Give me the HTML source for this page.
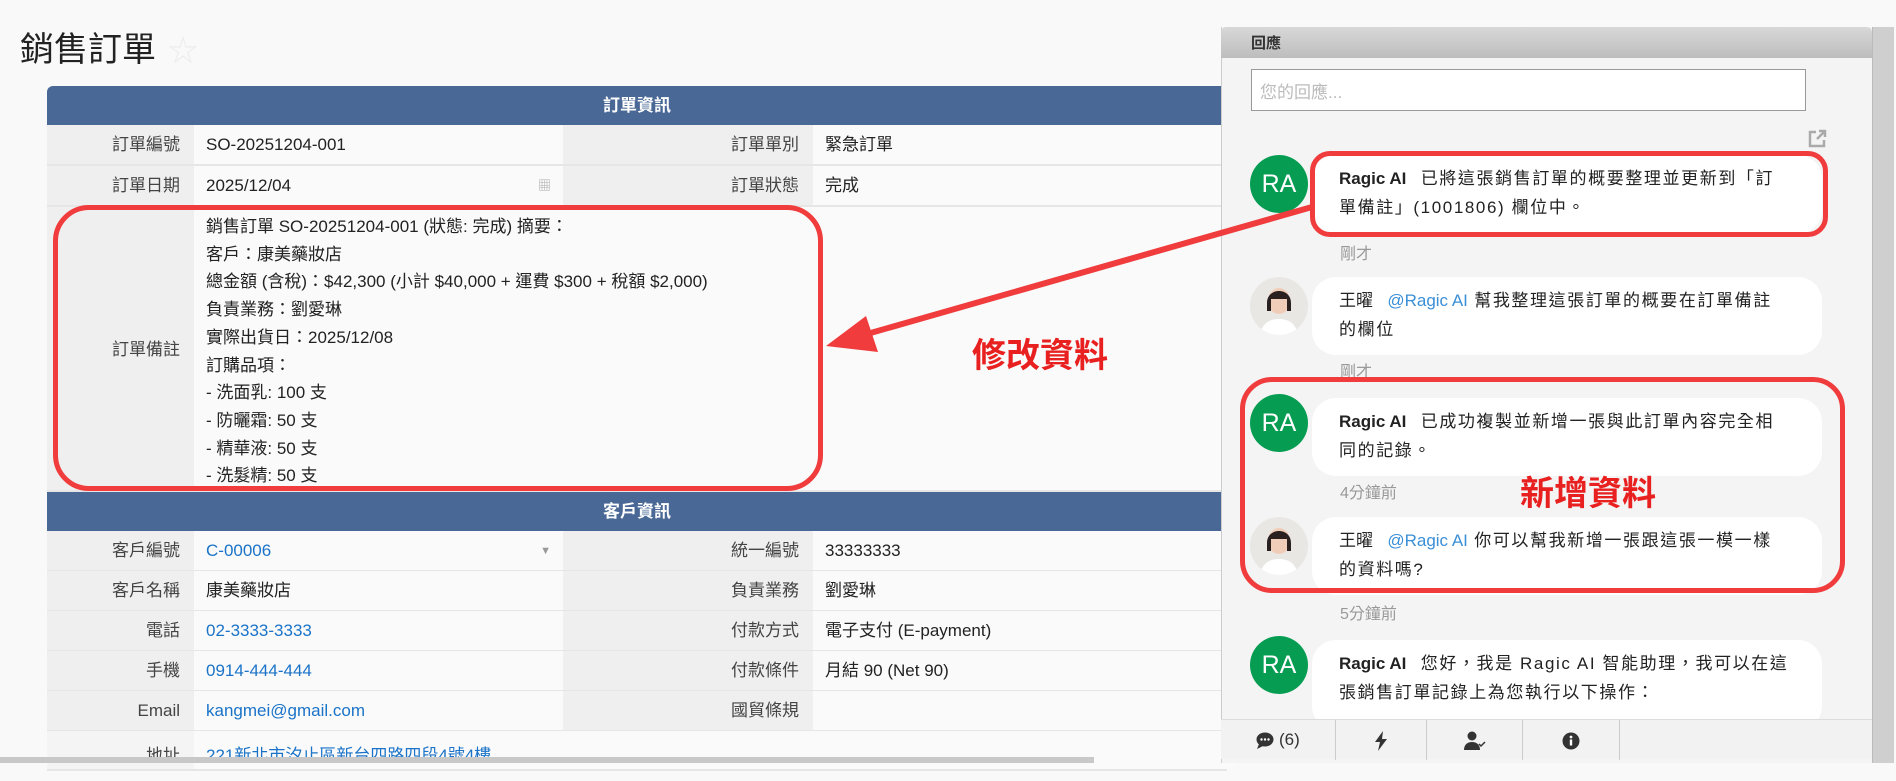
<!DOCTYPE html>
<html><head><meta charset="utf-8">
<style>
*{box-sizing:border-box;margin:0;padding:0}
body{width:1896px;height:763px;overflow:hidden;background:#f9f9f9;font-family:"Liberation Sans","Noto Sans CJK TC",sans-serif;color:#222;position:relative}
.abs{position:absolute}
.title{left:20px;top:22px;font-size:34px;color:#222}
.star{left:168px;top:26px;font-size:30px;color:#ececec}
.hdr{background:#4a6895;color:#fff;font-weight:bold;text-align:center;font-size:17px;height:39px;line-height:39px;border-radius:6px 6px 0 0}
.row{position:absolute;left:47px;width:1180px;height:41px;border-bottom:2px solid #e6e6e6;font-size:17px}
.row div{position:absolute;top:0;height:100%;line-height:40px}
.l1{left:0;width:147px;background:#efefef;text-align:right;padding-right:14px;color:#444}
.v1{left:147px;width:369px;background:#fafafa;padding-left:12px}
.l2{left:516px;width:250px;background:#efefef;text-align:right;padding-right:14px;color:#444}
.v2{left:766px;width:420px;background:#fafafa;padding-left:12px}
.link{color:#1a73c8}
.panel{left:1221px;top:27px;width:651px;height:736px;background:#f4f4f4;border-left:1px solid #ccc}
.ph{left:1221px;top:27px;width:651px;height:31px;background:linear-gradient(#d8d8d8,#bdbdbd);font-size:15px;font-weight:bold;padding:5px 0 0 30px;color:#333;border-radius:5px 5px 0 0}
.ta{left:1251px;top:69px;width:555px;height:42px;background:#fff;border:1px solid #999;color:#bbb;font-size:17px;padding:8px 8px}
.av{width:58px;height:58px;border-radius:50%;background:#069d52;color:#fff;font-size:25px;text-align:center;line-height:58px}
.avp{width:58px;height:58px;border-radius:50%;background:#e9e7e4;overflow:hidden}
.bub{left:1312px;width:510px;background:#fff;border-radius:24px;font-size:17px;line-height:29px;padding:9px 10px 9px 27px;color:#222;white-space:nowrap;letter-spacing:1.6px}
.bub b{margin-right:8px;letter-spacing:0}
.at{color:#3a8fd6;letter-spacing:0}
.ts{left:1340px;font-size:16px;color:#999}
.red{border:5px solid #f03c3c;border-radius:30px}
.note{color:#e8201f;font-weight:bold;font-size:34px}
.bar{left:1221px;top:719px;width:651px;height:40px;background:#f2f2f2;border-top:1px solid #ddd}
.tab{position:absolute;top:0;height:40px;border-right:1px solid #ccc;text-align:center;line-height:40px;font-size:17px;color:#333}
</style></head><body>
<div class="abs title">銷售訂單</div>
<div class="abs star">☆</div>

<div class="abs hdr" style="left:47px;top:86px;width:1180px">訂單資訊</div>
<div class="row" style="top:125px"><div class="l1">訂單編號</div><div class="v1">SO-20251204-001</div><div class="l2">訂單單別</div><div class="v2">緊急訂單</div></div>
<div class="row" style="top:166px"><div class="l1">訂單日期</div><div class="v1">2025/12/04<span style="position:absolute;right:12px;color:#aaa;font-size:13px">▦</span></div><div class="l2">訂單狀態</div><div class="v2">完成</div></div>
<div class="row" style="top:207px;height:285px">
 <div class="l1" style="line-height:285px">訂單備註</div>
 <div class="v1" style="width:1033px;line-height:27.7px;padding-top:6px;overflow:hidden">銷售訂單 SO-20251204-001 (狀態: 完成) 摘要：<br>客戶：康美藥妝店<br>總金額 (含稅)：$42,300 (小計 $40,000 + 運費 $300 + 稅額 $2,000)<br>負責業務：劉愛琳<br>實際出貨日：2025/12/08<br>訂購品項：<br>- 洗面乳: 100 支<br>- 防曬霜: 50 支<br>- 精華液: 50 支<br>- 洗髮精: 50 支</div>
</div>
<div class="abs hdr" style="left:47px;top:492px;width:1180px;border-radius:0">客戶資訊</div>
<div class="row" style="top:531px"><div class="l1">客戶編號</div><div class="v1"><span class="link">C-00006</span><span style="position:absolute;right:12px;color:#999;font-size:11px">▼</span></div><div class="l2">統一編號</div><div class="v2">33333333</div></div>
<div class="row" style="top:571px"><div class="l1">客戶名稱</div><div class="v1">康美藥妝店</div><div class="l2">負責業務</div><div class="v2">劉愛琳</div></div>
<div class="row" style="top:611px"><div class="l1">電話</div><div class="v1 link">02-3333-3333</div><div class="l2">付款方式</div><div class="v2">電子支付 (E-payment)</div></div>
<div class="row" style="top:651px"><div class="l1">手機</div><div class="v1 link">0914-444-444</div><div class="l2">付款條件</div><div class="v2">月結 90 (Net 90)</div></div>
<div class="row" style="top:691px"><div class="l1">Email</div><div class="v1 link">kangmei@gmail.com</div><div class="l2">國貿條規</div><div class="v2"></div></div>
<div class="row" style="top:731px;height:40px"><div class="l1" style="background:#f4f4f4;line-height:50px">地址</div><div class="v1 link" style="width:1040px;line-height:50px">221新北市汐止區新台四路四段4號4樓</div></div>
<div class="abs" style="left:0;top:757px;width:1094px;height:6px;background:#c8c8c8"></div>

<!-- panel -->
<div class="abs panel"></div>
<div class="abs" style="left:1872px;top:27px;width:22px;height:736px;background:#cfcfcf;border-left:1px solid #bbb"></div>
<div class="abs ph">回應</div>
<div class="abs ta">您的回應...</div>
<svg class="abs" style="left:1806px;top:128px" width="22" height="22" viewBox="0 0 22 22" fill="none" stroke="#aaa" stroke-width="2.5"><path d="M10 4H4v14h14v-6"/><path d="M11 11l8-8M13 3h6v6"/></svg>

<div class="abs av" style="left:1250px;top:155px">RA</div>
<div class="abs bub" style="top:155px;height:79px"><b>Ragic AI</b> 已將這張銷售訂單的概要整理並更新到「訂<br>單備註」(1001806) 欄位中。</div>
<div class="abs ts" style="top:240px">剛才</div>

<div class="abs avp" style="left:1250px;top:277px"><svg width="58" height="58"><ellipse cx="29" cy="24" rx="11" ry="13" fill="#f0cdb8"/><path d="M17 26c0-16 24-16 24 0v8h-4V22H21v12h-4z" fill="#2a2020"/><path d="M10 58c2-12 10-16 19-16s17 4 19 16z" fill="#fff"/></svg></div>
<div class="abs bub" style="top:277px;height:78px"><b style="font-weight:normal">王曜</b> <span class="at">@Ragic AI</span> 幫我整理這張訂單的概要在訂單備註<br>的欄位</div>
<div class="abs ts" style="top:358px">剛才</div>

<div class="abs av" style="left:1250px;top:394px">RA</div>
<div class="abs bub" style="top:398px;height:78px"><b>Ragic AI</b> 已成功複製並新增一張與此訂單內容完全相<br>同的記錄。</div>
<div class="abs ts" style="top:479px">4分鐘前</div>

<div class="abs avp" style="left:1250px;top:517px"><svg width="58" height="58"><ellipse cx="29" cy="24" rx="11" ry="13" fill="#f0cdb8"/><path d="M17 26c0-16 24-16 24 0v8h-4V22H21v12h-4z" fill="#2a2020"/><path d="M10 58c2-12 10-16 19-16s17 4 19 16z" fill="#fff"/></svg></div>
<div class="abs bub" style="top:517px;height:78px"><b style="font-weight:normal">王曜</b> <span class="at">@Ragic AI</span> 你可以幫我新增一張跟這張一模一樣<br>的資料嗎?</div>
<div class="abs ts" style="top:600px">5分鐘前</div>

<div class="abs av" style="left:1250px;top:636px">RA</div>
<div class="abs bub" style="top:640px;height:90px"><b>Ragic AI</b> 您好，我是 Ragic AI 智能助理，我可以在這<br>張銷售訂單記錄上為您執行以下操作：</div>

<div class="abs bar">
 <div class="tab" style="left:0;width:115px"><svg width="18" height="17" viewBox="0 0 18 17" style="vertical-align:middle"><ellipse cx="9" cy="7.5" rx="8.5" ry="7" fill="#333"/><path d="M3 12l-2 5 6-3z" fill="#333"/><circle cx="5.5" cy="7.5" r="1.2" fill="#fff"/><circle cx="9" cy="7.5" r="1.2" fill="#fff"/><circle cx="12.5" cy="7.5" r="1.2" fill="#fff"/></svg> (6)</div>
 <div class="tab" style="left:115px;width:91px"><svg width="14" height="20" viewBox="0 0 14 20" style="vertical-align:middle"><path d="M9 0L1 11h5l-2 9 9-12H8z" fill="#333"/></svg></div>
 <div class="tab" style="left:206px;width:96px"><svg width="22" height="20" viewBox="0 0 22 20" style="vertical-align:middle"><circle cx="8" cy="5" r="4.5" fill="#333"/><path d="M0 19c0-6 4-8 8-8s8 2 8 8z" fill="#333"/><path d="M15 13l2 2 4-4" stroke="#333" fill="none" stroke-width="1.5"/></svg></div>
 <div class="tab" style="left:302px;width:97px"><svg width="18" height="18" viewBox="0 0 18 18" style="vertical-align:middle"><circle cx="9" cy="9" r="8.5" fill="#333"/><rect x="7.8" y="7.5" width="2.4" height="6" fill="#fff"/><circle cx="9" cy="5" r="1.4" fill="#fff"/></svg></div>
</div>

<!-- annotations -->
<div class="abs red" style="left:53px;top:205px;width:770px;height:286px;border-radius:36px"></div>
<div class="abs red" style="left:1310px;top:151px;width:518px;height:86px;border-radius:20px"></div>
<div class="abs red" style="left:1240px;top:377px;width:605px;height:216px;border-radius:32px"></div>
<svg class="abs" style="left:0;top:0" width="1896" height="763"><line x1="1312" y1="207" x2="860" y2="336" stroke="#f03c3c" stroke-width="6"/><polygon points="826,346 866,316 878,352" fill="#f03c3c"/></svg>
<div class="abs note" style="left:972px;top:328px">修改資料</div>
<div class="abs note" style="left:1520px;top:466px">新增資料</div>
</body></html>
